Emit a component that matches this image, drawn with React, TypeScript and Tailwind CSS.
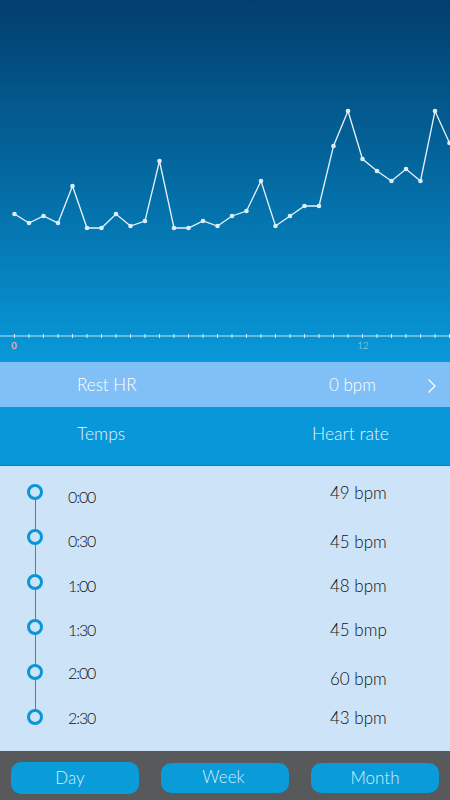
const points = [
  214, 223, 216, 223, 186, 228, 228, 214, 226, 221, 161, 228, 228, 221, 226, 216,
  211, 181, 226, 216, 206, 206, 146, 111, 159, 171, 181, 169, 181, 111, 143,
];

const STEP = 14.5;

type Reading = { time: string; bpm: string; timeCls: string; bpmCls: string };

const readings: Reading[] = [
  { time: "0:00", bpm: "49 bpm", timeCls: "mt-[12px]", bpmCls: "mt-[8px]" },
  { time: "0:30", bpm: "45 bpm", timeCls: "mt-[11px]", bpmCls: "mt-[12px]" },
  { time: "1:00", bpm: "48 bpm", timeCls: "mt-[11px]", bpmCls: "mt-[11px]" },
  { time: "1:30", bpm: "45 bmp", timeCls: "mt-[10px]", bpmCls: "mt-[10px]" },
  { time: "2:00", bpm: "60 bpm", timeCls: "mt-[8px]", bpmCls: "mt-[14px]" },
  { time: "2:30", bpm: "43 bpm", timeCls: "mt-[8px]", bpmCls: "mt-[8px]" },
];

/** Courbe du rythme cardiaque + axe horaire. */
function Chart() {
  const xs = points.map((_, i) => STEP * (i + 1));
  const path = points.map((y, i) => `${i === 0 ? "M" : "L"}${xs[i]},${y}`).join(" ");
  return (
    <svg width="450" height="362" viewBox="0 0 450 362" className="block">
      <path d={path} fill="none" stroke="#e6f3fb" strokeWidth="1.3" />
      {points.map((y, i) => (
        <circle key={i} cx={xs[i]} cy={y} r="2.3" fill="#dcedf8" />
      ))}
      <line x1="0" y1="336" x2="450" y2="336" stroke="#bfe6f7" strokeWidth="1" />
      {xs.map((x, i) => (
        <line key={i} x1={x} y1="334" x2={x} y2="338" stroke="#d6f0fb" strokeWidth="1" />
      ))}
      <text x="14" y="349" fontSize="9.5" fontWeight="700" fill="#f0a8b8" textAnchor="middle" fontFamily="Lato, sans-serif">
        0
      </text>
      <text x="363" y="349" fontSize="9.5" fill="#a3dcf4" textAnchor="middle" fontFamily="Lato, sans-serif">
        12
      </text>
    </svg>
  );
}

export default function App() {
  return (
    <div className="flex h-[800px] w-[450px] flex-col overflow-hidden font-['Lato','Noto_Sans',sans-serif] font-light">
      {/* Graphique */}
      <div className="h-[362px] shrink-0 bg-gradient-to-b from-[#023f6e] to-[#0999da]">
        <Chart />
      </div>

      {/* Repos */}
      <div className="flex h-[45px] shrink-0 items-center bg-[#80c0f6] text-[17px] text-white">
        <span className="w-[329px] pl-[77px]">Rest HR</span>
        <span className="flex-1">0 bpm</span>
        <svg width="10" height="16" viewBox="0 0 10 16" className="mr-[13px] mt-[2px]">
          <path d="M1.5 1.5 L8 8 L1.5 14.5" fill="none" stroke="#ffffff" strokeWidth="1.2" />
        </svg>
      </div>

      {/* En-tête */}
      <div className="flex h-[59px] shrink-0 items-center border-b border-[#0a7db6] bg-[#0897d8] pb-[3px] text-[17.5px] text-[#e4f4fd]">
        <span className="w-[312px] pl-[77px]">Temps</span>
        <span>Heart rate</span>
      </div>

      {/* Liste */}
      <div className="flex-1 bg-[#cde4f8] pt-[4px]">
        {readings.map((r, i) => (
          <div key={r.time} className="flex h-[45px] items-start">
            <div className="relative h-full w-[68px] shrink-0">
              {i < readings.length - 1 && (
                <div className="absolute left-[35px] top-[22px] h-[45px] w-px bg-[#4f7f9f]" />
              )}
              <div className="absolute left-[27px] top-[14px] h-4 w-4 rounded-full border-[3px] border-[#0a96d6] bg-[#cde4f8]" />
            </div>
            <span className={`w-[262px] text-[16px] leading-[30px] tracking-[-1.1px] text-[#111] ${r.timeCls}`}>
              {r.time}
            </span>
            <span className={`text-[17px] leading-[30px] text-[#111] ${r.bpmCls}`}>{r.bpm}</span>
          </div>
        ))}
      </div>

      {/* Période */}
      <div className="flex h-[49px] shrink-0 items-start justify-between bg-[#58595b] px-[11px]">
        <button className="mt-[11px] h-[32px] w-[128px] rounded-[10px] bg-[#0a9bd9] pr-[10px] text-[17px] text-[#d4effc]">
          Day
        </button>
        <button className="mt-[12px] h-[30px] w-[128px] rounded-[10px] bg-[#0a9bd9] pb-[3px] pr-[3px] text-[17px] text-[#d4effc]">
          Week
        </button>
        <button className="mt-[12px] h-[30px] w-[128px] rounded-[10px] bg-[#0a9bd9] text-[17px] text-[#d4effc]">
          Month
        </button>
      </div>
    </div>
  );
}
